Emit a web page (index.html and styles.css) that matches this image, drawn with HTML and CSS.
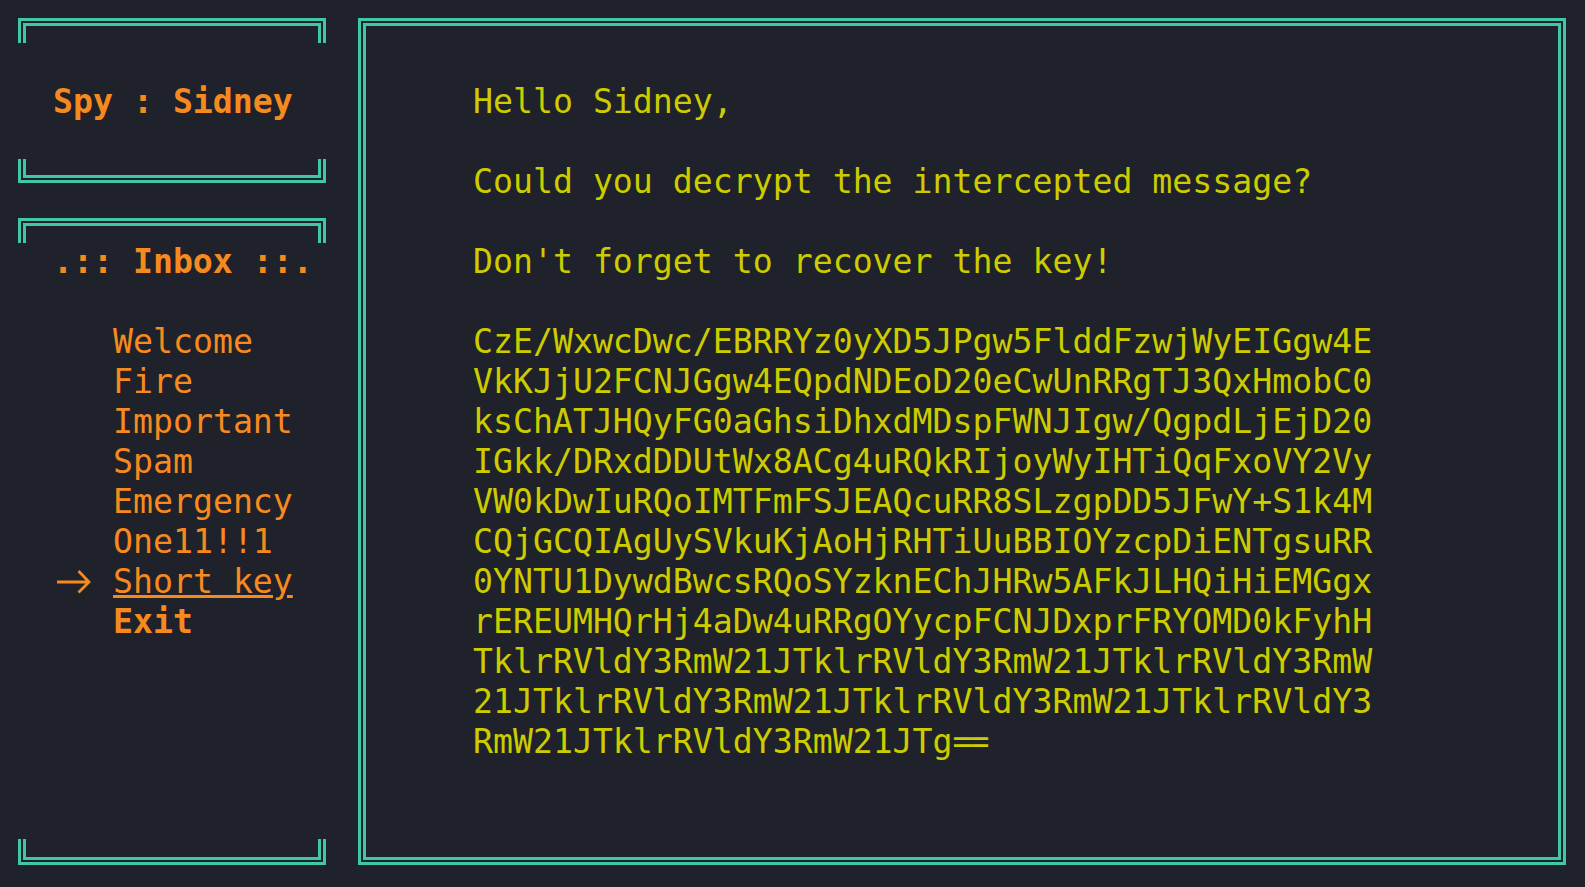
FILE: index.html
```html
<!DOCTYPE html>
<html lang="en">
<head>
<meta charset="utf-8">
<title>Spy : Sidney</title>
<link rel="stylesheet" href="styles.css">
</head>
<body>
<div class="screen">
  <aside class="sidebar">
    <section class="panel panel-agent">
      <div class="bracket bracket-top"></div>
      <div class="panel-body agent-body">
        <div class="row agent">Spy : Sidney</div>
      </div>
      <div class="bracket bracket-bottom"></div>
    </section>
    <section class="panel panel-inbox">
      <div class="bracket bracket-top"></div>
      <div class="panel-body inbox-body">
        <div class="row inbox-title">.:: Inbox ::.</div>
        <ul class="menu">
          <li class="row item">Welcome</li>
          <li class="row item">Fire</li>
          <li class="row item">Important</li>
          <li class="row item">Spam</li>
          <li class="row item">Emergency</li>
          <li class="row item">One11!!1</li>
          <li class="row item active"><svg class="arrow" viewBox="0 0 40 40" width="40" height="40"><path d="M4 20 H35 M25.5 9 L36 20 L25.5 30.5"/></svg><span class="link">Short key</span></li>
          <li class="row item exit">Exit</li>
        </ul>
      </div>
      <div class="bracket bracket-bottom"></div>
    </section>
  </aside>
  <main class="message">
    <div class="text"><div class="row">Hello Sidney,</div><div class="row"> </div><div class="row">Could you decrypt the intercepted message?</div><div class="row"> </div><div class="row">Don't forget to recover the key!</div><div class="row"> </div><div class="row">CzE/WxwcDwc/EBRRYz0yXD5JPgw5FlddFzwjWyEIGgw4E</div><div class="row">VkKJjU2FCNJGgw4EQpdNDEoD20eCwUnRRgTJ3QxHmobC0</div><div class="row">ksChATJHQyFG0aGhsiDhxdMDspFWNJIgw/QgpdLjEjD20</div><div class="row">IGkk/DRxdDDUtWx8ACg4uRQkRIjoyWyIHTiQqFxoVY2Vy</div><div class="row">VW0kDwIuRQoIMTFmFSJEAQcuRR8SLzgpDD5JFwY+S1k4M</div><div class="row">CQjGCQIAgUySVkuKjAoHjRHTiUuBBIOYzcpDiENTgsuRR</div><div class="row">0YNTU1DywdBwcsRQoSYzknEChJHRw5AFkJLHQiHiEMGgx</div><div class="row">rEREUMHQrHj4aDw4uRRgOYycpFCNJDxprFRYOMD0kFyhH</div><div class="row">TklrRVldY3RmW21JTklrRVldY3RmW21JTklrRVldY3RmW</div><div class="row">21JTklrRVldY3RmW21JTklrRVldY3RmW21JTklrRVldY3</div><div class="row">RmW21JTklrRVldY3RmW21JTg<span class="eq">==</span></div></div>
  </main>
</div>
</body>
</html>
```
FILE: styles.css
```css
* {
  box-sizing: border-box;
}

html,
body {
  margin: 0;
  padding: 0;
  background: #1f222a;
}

body {
  height: 887px;
  overflow: hidden;
  font-family: "DejaVu Sans Mono", "Liberation Mono", monospace;
  font-size: 33.2px;
  line-height: 40px;
  color: #f78a1e;
}

.screen {
  display: flex;
  gap: 32px;
  padding: 18px 0 0 18px;
  height: 887px;
}

/* ---------- sidebar ---------- */

.sidebar {
  width: 308px;
  height: 847px;
  display: flex;
  flex-direction: column;
  flex: none;
}

.panel {
  display: flex;
  flex-direction: column;
}

.panel-agent {
  height: 165px;
}

.panel-inbox {
  margin-top: 35px;
  flex: 1;
}

.bracket {
  flex: none;
  border: 8px double #3fc8a8;
}

.bracket-top {
  height: 25px;
  border-bottom: none;
}

.bracket-bottom {
  height: 24px;
  border-top: none;
}

.panel-inbox .bracket-bottom {
  height: 26px;
}

.panel-body {
  flex: 1;
  padding-left: 35px;
}

.agent-body {
  padding-top: 39px;
}

.row {
  height: 40px;
  white-space: pre;
}

.agent {
  font-weight: bold;
}

.inbox-title {
  font-weight: bold;
  margin-top: -1px;
}

.menu {
  list-style: none;
  margin: 40px 0 0;
  padding: 0;
}

.item {
  padding-left: 60px;
}

.item.active {
  display: flex;
  padding-left: 0;
}

.arrow {
  flex: none;
  width: 40px;
  height: 40px;
  margin-right: 20px;
  fill: none;
  stroke: #f78a1e;
  stroke-width: 2.8;
}

.link {
  text-decoration: underline;
  text-decoration-thickness: 3px;
  text-underline-offset: 2px;
}

.exit {
  font-weight: bold;
}

/* ---------- message panel ---------- */

.message {
  width: 1208px;
  height: 847px;
  flex: none;
  border: 8px double #3fc8a8;
  padding: 56px 0 0 107px;
  color: #cccc00;
}

.eq {
  letter-spacing: -3px;
}
```
